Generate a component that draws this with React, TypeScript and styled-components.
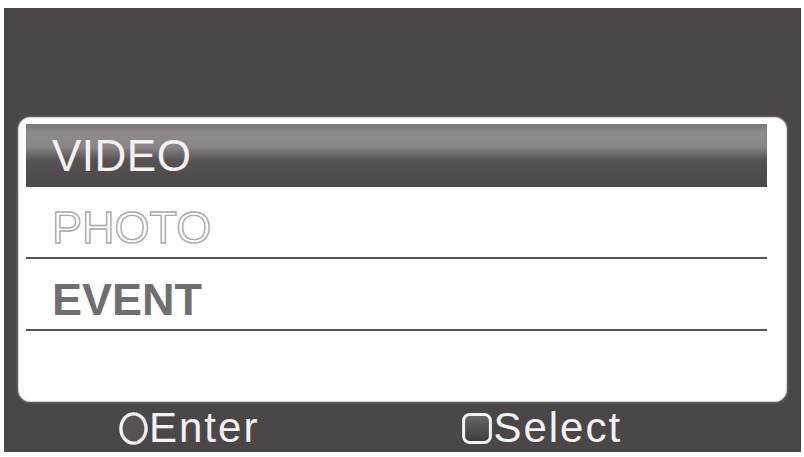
import React from "react";
import styled, { createGlobalStyle } from "styled-components";

const GlobalStyle = createGlobalStyle`
    html, body {
        margin: 0;
        padding: 0;
        background: #fff;
    }
    body {
        font-family: "Liberation Sans", Arial, sans-serif;
    }
`;

const Screen = styled.div`
    box-sizing: border-box;
    width: 797px;
    height: 444px;
    margin: 8px 0 0 4px;
    background: #4b4748;
    display: flex;
    flex-direction: column;
    padding-top: 109px;
`;

const Card = styled.div`
    box-sizing: border-box;
    height: 285px;
    margin: 0 14px;
    padding: 6px 19px 0 7px;
    background: #fff;
    border: 1px solid #d4d2d2;
    border-radius: 12px;
    box-shadow: 0 0 3px rgba(255, 255, 255, 0.35);
`;

const SelectedBar = styled.div`
    height: 63px;
    display: flex;
    align-items: center;
    padding-left: 26px;
    background: linear-gradient(
        to bottom,
        #7b7778 0%,
        #8f8b8c 14%,
        #8a8687 36%,
        #565253 58%,
        #4c4849 100%
    );
    color: #f2f2f2;
    font-size: 44px;
    letter-spacing: 0.5px;
`;

const Row = styled.div<{ $variant: "outline" | "bold" }>`
    box-sizing: border-box;
    height: 72px;
    display: flex;
    align-items: flex-end;
    padding: 0 0 7px 26px;
    border-bottom: 2px solid #555;
    font-size: 45px;
    font-weight: ${(p) => (p.$variant === "bold" ? 700 : 400)};
    color: ${(p) => (p.$variant === "bold" ? "#6f6f6f" : "#fff")};
    -webkit-text-stroke: ${(p) => (p.$variant === "outline" ? "1.4px #a9a9a9" : "0")};
    line-height: 1;
`;

const Footer = styled.div`
    flex: 1;
    display: flex;
    align-items: center;
    padding: 2px 0 0 115px;
    gap: 203px;
`;

const Hint = styled.div`
    display: flex;
    align-items: center;
    color: #f2f2f2;
    font-size: 42px;
    letter-spacing: 2px;
    line-height: 1;
`;

const KeyIcon = styled.svg`
    display: block;
    flex-shrink: 0;
    margin-right: 1px;
`;

const RoundKey = () => (
    <KeyIcon width="29" height="33" viewBox="0 0 29 33">
        <ellipse cx="14.5" cy="16.5" rx="12.6" ry="14.6" fill="#565354" stroke="#f2f2f2" strokeWidth="3.4" />
    </KeyIcon>
);

const SquareKey = () => (
    <KeyIcon width="30" height="31" viewBox="0 0 30 31">
        <defs>
            <linearGradient id="sq" x1="0" y1="0" x2="0" y2="1">
                <stop offset="0" stopColor="#6a6667" />
                <stop offset="1" stopColor="#3f3b3c" />
            </linearGradient>
        </defs>
        <rect x="1.6" y="1.6" width="26.8" height="27.8" rx="6" fill="url(#sq)" stroke="#f2f2f2" strokeWidth="3" />
    </KeyIcon>
);

export default function App() {
    return (
        <>
            <GlobalStyle />
            <Screen>
                <Card>
                    <SelectedBar>VIDEO</SelectedBar>
                    <Row $variant="outline">PHOTO</Row>
                    <Row $variant="bold">EVENT</Row>
                </Card>
                <Footer>
                    <Hint>
                        <RoundKey />
                        Enter
                    </Hint>
                    <Hint>
                        <SquareKey />
                        Select
                    </Hint>
                </Footer>
            </Screen>
        </>
    );
}
